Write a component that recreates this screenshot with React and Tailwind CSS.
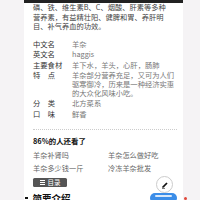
import React from "react";

const rows = [
  { label: "中文名", value: "羊杂" },
  { label: "英文名", value: "haggis" },
  { label: "主要食材", value: "羊下水，羊头，心肝，肠肺" },
  { label: ["特", "点"], value: "羊杂部分营养充足，又可为人们驱寒御冷，历来是一种经济实惠的大众化风味小吃。" },
  { label: ["分", "类"], value: "北方菜系" },
  { label: ["口", "味"], value: "鲜香" },
];

const links = ["羊杂补肾吗", "羊杂怎么做好吃", "羊杂多少钱一斤", "冷冻羊杂批发"];

function Label({ label }) {
  if (Array.isArray(label)) {
    return (
      <span className="flex w-[22px] justify-between">
        <span>{label[0]}</span>
        <span>{label[1]}</span>
      </span>
    );
  }
  return <span>{label}</span>;
}

export default function App() {
  return (
    <div
      className="relative flex h-[200px] w-[200px] overflow-hidden bg-[#f5f3f5]"
      style={{ fontFamily: '"Noto Sans CJK SC", "Noto Sans", sans-serif' }}
    >
      <div className="ml-[24px] w-[159px] bg-white">
        <div className="h-[3px] bg-[#222]" />
        <div className="pl-[9px] pr-[6px]">
          <p className="pt-[0.4px] text-[7.25px] leading-[9.2px] text-[#444]">
            磷、铁、维生素B、C、烟酸、肝素等多种
            <br />
            营养素，有益精壮阳、健脾和胃、养肝明
            <br />
            目、补气养血的功效。
          </p>

          <div className="mt-[8.5px] flex flex-col gap-[1.8px] text-[7.3px] leading-[8.8px]">
            {rows.map((r, i) => (
              <div key={i} className="flex">
                <div className="w-[39px] shrink-0 text-[#333]">
                  <Label label={r.label} />
                </div>
                <div className="w-[106px] text-[#777]">{r.value}</div>
              </div>
            ))}
          </div>

          <div className="mt-[10px] border-t border-dotted border-[#ccc]" />

          <div className="mt-[6.5px] text-[7.4px] font-bold leading-[9px] text-[#111]">
            86%的人还看了
          </div>

          <div className="mt-[6px] grid grid-cols-[75px_1fr] gap-y-[4px] text-[7.2px] leading-[9px] text-[#666]">
            {links.map((t) => (
              <span key={t}>{t}</span>
            ))}
          </div>

          <div className="mt-[4.5px] flex h-[9px] w-[34px] items-center justify-center gap-[3px] rounded-[1.5px] bg-[#555] text-[6.5px] leading-none text-white">
            <span className="flex flex-col gap-[1px]">
              <span className="block h-[0.8px] w-[5px] bg-white" />
              <span className="block h-[0.8px] w-[5px] bg-white" />
              <span className="block h-[0.8px] w-[5px] bg-white" />
            </span>
            <span>目录</span>
          </div>

          <div className="-ml-[8px] mt-[6px] flex items-center gap-[5px]">
            <span className="block h-[2.5px] w-[2.5px] bg-[#111]" />
            <span className="text-[9.5px] font-bold leading-[10px] text-[#111]">简要介绍</span>
          </div>
        </div>
      </div>

      <div className="absolute left-[156px] top-[176px] flex h-[17px] w-[17px] items-center justify-center rounded-full border border-[#ccc] bg-white">
        <svg width="8" height="8" viewBox="0 0 8 8">
          <path d="M1.2 6.8 L1.6 5.2 L5.4 1.4 L6.6 2.6 L2.8 6.4 Z" fill="#111" />
          <path d="M1 7.4 H4" stroke="#111" strokeWidth="0.6" />
        </svg>
      </div>

      <div className="absolute left-[150px] top-[193px] h-[10px] w-[27px] rounded-full bg-[#3b8de8]">
        <div className="mx-auto mt-[2px] h-[1.5px] w-[17px] rounded-full bg-white/80" />
      </div>

      <div className="absolute left-[184px] top-[197px] h-[3px] w-[3px] rounded-full bg-[#e0473a]" />
    </div>
  );
}
